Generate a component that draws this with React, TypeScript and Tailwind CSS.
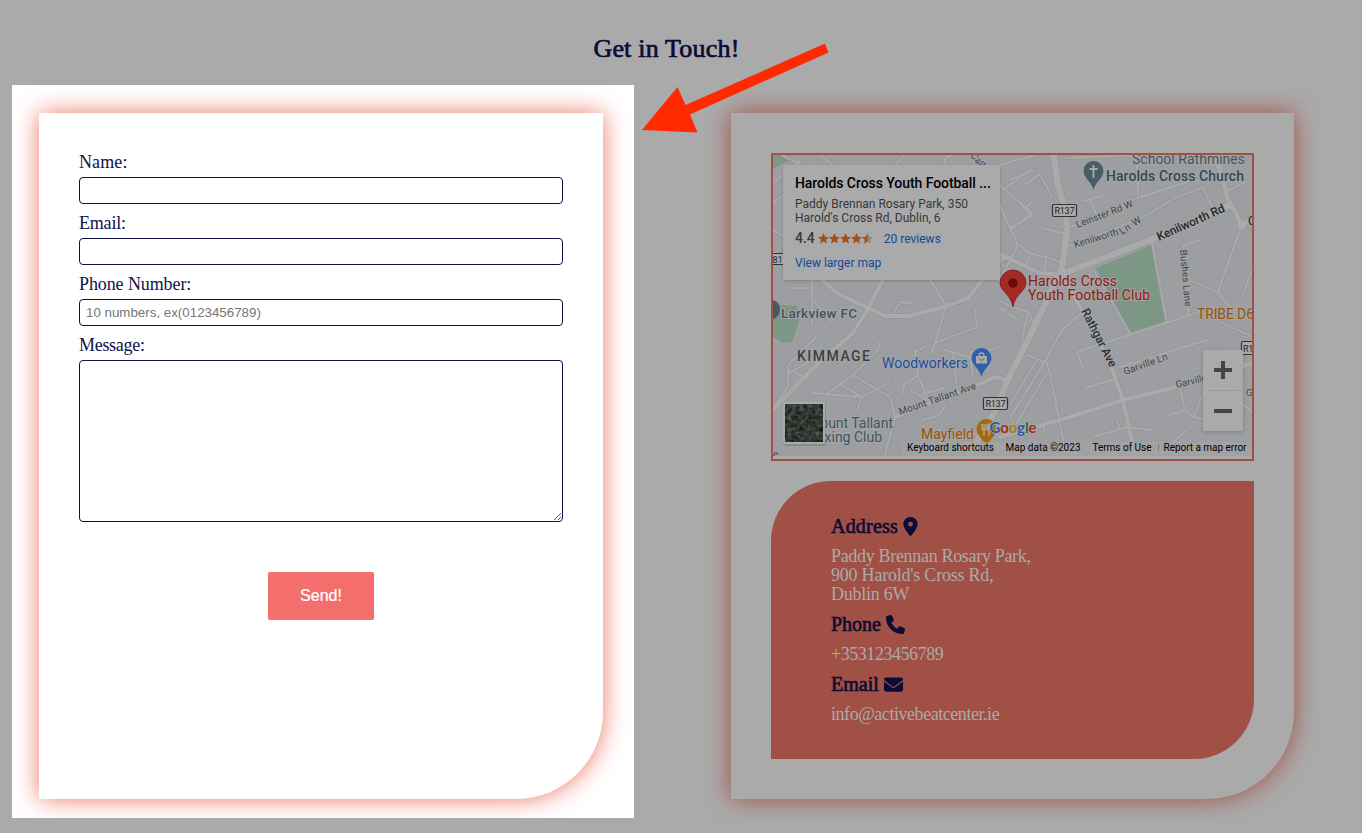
import React from "react";
import { FaLocationDot, FaPhone, FaEnvelope } from "react-icons/fa6";

const minorRoads = [
  "M773 183L800 160M782 155L812 170M820 155L838 170M905 155L885 175M773 203L790 190",
  "M947 165C935 156 968 148 990 155M1000 165L1035 155M1003 190L1030 170",
  "M1000 205L1018 245L1000 280M1000 185L1032 213L1010 230",
  "M1010 180L1033 170M1023 186L1040 174L1052 197M1020 203L1032 216L1010 228M1031 202L1024 210",
  "M1042 228L1063 233M1020 245C1028 257 1046 255 1060 262M1030 255L1026 265M1046 260L1045 271",
  "M1067 158L1137 155M1137 162L1138 195M1084 201L1105 195M1091 201L1097 217",
  "M1070 227L1138 198L1193 180M1070 246L1141 218L1175 198L1203 187L1212 207",
  "M1212 155L1227 190M1226 192L1245 182M1242 225L1218 291L1225 302L1253 322M1253 268L1243 294",
  "M1200 240L1183 246L1189 281L1188 315M1189 280L1218 292",
  "M1094 270L1130 334M1152 242L1167 323M1083 368L1077 352L1190 315L1208 308",
  "M1220 322L1253 337M1120 367L1207 340M1085 388L1113 380M1093 437L1127 427L1152 430M1117 420L1119 427",
  "M1180 388L1185 410L1193 417L1206 420M1170 415L1185 410M1194 416L1204 391",
  "M1082 313L1062 330L1047 358L1010 418M1027 355L1047 363L1050 373L1066 455M1047 373L1017 423M1037 360L1010 405",
  "M1000 301L1010 306L1028 312L1036 327M1028 312L1022 340M1043 424L1045 434",
  "M812 280L812 325M790 288L812 288M813 299L831 322",
  "M947 303L935 343L931 354M975 310L977 327L935 343M1000 308L1018 320",
  "M773 408L788 387L788 365L818 335M788 369L808 379M788 374L835 347",
  "M813 393L862 397L890 382M828 393L853 375L875 353L880 345L877 340M853 375L890 397L895 417L885 455M840 384L862 397L857 410",
  "M918 373L915 350M902 395L904 385L918 375L927 397M915 352L925 347M922 394L945 388M953 351L956 383M973 377L970 352L985 349",
  "M922 420L938 416L946 405M945 350L972 358L1000 346M910 390L930 401",
  "M1123 450L1170 444L1187 430M1217 350L1253 367M1240 355L1238 400L1253 413",
  "M773 255L783 245M773 230L783 236M930 280L943 300L946 306M980 280L968 300M892 316L900 302L912 303",
];
const majorRoads = [
  "M773 410L818 363L853 333L868 309L883 280",
  "M822 280L840 295L862 305L885 316L908 316L945 307L968 298L986 276L1003 258L1010 258",
  "M895 417L978 385L995 377L1008 380",
  "M1000 254L1012 260L1040 273L1062 275L1080 307L1110 363L1123 400L1135 455",
  "M1000 437L1060 420L1123 400L1177 387L1253 363",
  "M1217 155L1227 197L1242 225L1253 219",
];
const mainRoad =
  "M1053 150L1058 185L1066 212L1067 232L1062 268L1047 300L1023 350L1010 375L994 413L966 460M1062 274L1153 239L1228 206";

function Map() {
  return (
    <svg className="block h-[301px] w-[479px]" viewBox="773 155 479 301" fontFamily="Roboto, sans-serif">
      <defs>
        <filter id="aerial" x="0" y="0" width="1" height="1" colorInterpolationFilters="sRGB">
          <feTurbulence type="fractalNoise" baseFrequency="0.25" numOctaves="3" seed="7" />
          <feColorMatrix values="0.45 0 0 0 -0.04 0.4 0.08 0 0 -0.02 0.4 0 0.05 0 -0.03 0 0 0 0 1" />
        </filter>
      </defs>
      <rect x="773" y="155" width="480" height="301" fill="#9c9ea1" />
      <g fill="#7c9785">
        <path d="M773 155H790L789 161L773 168Z" />
        <path d="M773 304L797 306L799 322L792 342L783 343L773 337Z" />
        <path d="M1096 268L1152 245L1166 321L1130 335Z" />
      </g>
      <g fill="none" strokeLinejoin="round" strokeLinecap="round">
        {minorRoads.map((d) => <path key={d} d={d} stroke="#939598" strokeWidth="3.9" />)}
        {majorRoads.map((d) => <path key={d} d={d} stroke="#939598" strokeWidth="5.4" />)}
        <path d={mainRoad} stroke="#939598" strokeWidth="7.8" />
        {minorRoads.map((d) => <path key={d} d={d} stroke="#a7a8a9" strokeWidth="2.4" />)}
        {majorRoads.map((d) => <path key={d} d={d} stroke="#a9aaaa" strokeWidth="4" />)}
        <path d={mainRoad} stroke="#a9aaaa" strokeWidth="6.4" />
        <circle cx="1242" cy="225" r="4" fill="#a9aaaa" stroke="#a9aaaa" />
      </g>
      <g fill="#3f4346" stroke="#a4a5a6" strokeWidth="2" paintOrder="stroke" fontSize="9.8">
        <text transform="translate(1077.500 228) rotate(-21)" textLength="60">Leinster Rd W</text>
        <text transform="translate(1075 248) rotate(-17)" textLength="46">Kenilworth</text>
        <text transform="translate(1122 235) rotate(-34)" textLength="24">Ln W</text>
        <text transform="translate(1159 241) rotate(-24)" fontSize="12" fontWeight="500" fill="#252729" textLength="73">Kenilworth Rd</text>
        <text transform="translate(1180 250) rotate(85)" textLength="57">Bushes Lane</text>
        <text transform="translate(1081 311) rotate(63)" fontSize="12" fontWeight="500" fill="#2c2f31" textLength="64">Rathgar Ave</text>
        <text transform="translate(1125 375) rotate(-20)" textLength="46">Garville Ln</text>
        <text transform="translate(1176.500 388) rotate(-13)" textLength="40">Garville A</text>
        <text transform="translate(900 415) rotate(-19)" textLength="81">Mount Tallant Ave</text>
        <text transform="translate(970 156) rotate(48)" textLength="20">Cath</text>
        <text x="1248" y="225" fontSize="12" fill="#252729">C</text>
        <text transform="translate(1152 451) rotate(-3)" fill="#808285">Winton Ave</text>
        <text x="1246" y="396">Ga</text>
        <text x="773" y="457">e</text>
      </g>
      <g fill="#aaa" stroke="#303234" strokeWidth="1.2">
        <rect x="1052.5" y="204.5" width="24" height="12" rx="1.5" />
        <rect x="983.5" y="397.5" width="24" height="12" rx="1.5" />
        <rect x="1241.5" y="341.5" width="24" height="13" rx="1.5" />
        <rect x="761.5" y="253.500" width="24" height="11" rx="1.5" />
      </g>
      <g fill="#222426" fontSize="9">
        <text x="1054.500" y="214" textLength="20">R137</text>
        <text x="985.500" y="407" textLength="20">R137</text>
        <text x="1243" y="351.500" textLength="20">R137</text>
        <text x="767" y="262.500">R81</text>
      </g>
      <g stroke="#a4a5a6" strokeWidth="2" paintOrder="stroke" fontSize="14">
        <text x="1132" y="164" fill="#41545e" textLength="113">School Rathmines</text>
        <text x="1106" y="181" fill="#344851" fontWeight="500" textLength="138">Harolds Cross Church</text>
        <text x="1028" y="286" fill="#8e1711" textLength="89">Harolds Cross</text>
        <text x="1028" y="300" fill="#8e1711" textLength="122">Youth Football Club</text>
        <text x="781" y="318" fill="#41545e" fontWeight="500" fontSize="13.500" textLength="76">Larkview FC</text>
        <text x="797" y="361" fill="#3b3e41" fontWeight="500" textLength="73">KIMMAGE</text>
        <text x="882" y="368" fill="#184da0" textLength="86">Woodworkers</text>
        <text x="921" y="439" fill="#985209" textLength="53">Mayfield</text>
        <text x="1197" y="319" fill="#985209" textLength="57">TRIBE D6</text>
        <text x="808" y="428" fill="#41545e" textLength="85">Mount Tallant</text>
        <text x="808" y="442" fill="#41545e" textLength="74">Boxing Club</text>
      </g>
      <path d="M773 300A10 10 0 0 1 773 319Z" fill="#465962" />
      <path d="M1093.500 190C1092 182 1083.500 178 1083.500 171A10 10 0 0 1 1103.500 171C1103.500 178 1095 182 1093.500 190Z" fill="#465c66" />
      <path d="M1093.500 165V178M1089.500 169H1097.500" stroke="#aaa" strokeWidth="1.8" />
      <path d="M981.500 377C980 369 971.500 365 971.500 358A10 10 0 0 1 991.500 358C991.500 365 983 369 981.500 377Z" fill="#325fa9" />
      <path d="M976 356H987V363.500H976Z" fill="#aaa" />
      <path d="M979 357V355.500A2.500 2.500 0 0 1 984 355.500V357" fill="none" stroke="#aaa" strokeWidth="1.3" />
      <path d="M979 358.500Q981.500 362 984 358.500" fill="none" stroke="#325fa9" />
      <path d="M986.500 448C985 440 976.500 436 976.500 429A10 10 0 0 1 996.500 429C996.500 436 988 440 986.500 448Z" fill="#a4690a" />
      <path d="M982 424V428Q982 430 984 430T986 428V424M984 424V436M989 436V424Q987 426 988 431" fill="none" stroke="#aaa" strokeWidth="1.3" />
      <path d="M1013 307C1011 294 1000 291 1000 283A13 13 0 0 1 1026 283C1026 291 1015 294 1013 307Z" fill="#a22a22" stroke="#801915" strokeWidth="0.8" />
      <circle cx="1013" cy="283" r="4.700" fill="#680c09" />
      <rect x="783" y="403" width="43" height="43" rx="3" fill="#000" opacity="0.12" />
      <rect x="783" y="402" width="42" height="42" rx="2" fill="#aaa" />
      <rect x="785" y="404" width="38" height="38" fill="#2c342c" filter="url(#aerial)" />
      <text y="433" x="989.500" fontSize="15" fontFamily="Lato, sans-serif" fontWeight="700" textLength="47" stroke="#aaa" strokeWidth="1.5" paintOrder="stroke">
        <tspan fill="#2c59a4">G</tspan><tspan fill="#9d2d24">o</tspan><tspan fill="#a87d05">o</tspan><tspan fill="#2c59a4">g</tspan><tspan fill="#23713a">l</tspan><tspan fill="#9d2d24">e</tspan>
      </text>
      <rect x="902" y="442" width="351" height="14" fill="#a4a4a4" fillOpacity="0.7" />
      <g fontSize="10" fill="#000">
        <text x="907" y="451" textLength="87">Keyboard shortcuts</text>
        <text x="1005.500" y="451" textLength="75">Map data ©2023</text>
        <text x="1092.500" y="451" textLength="59">Terms of Use</text>
        <text x="1163.500" y="451" textLength="83">Report a map error</text>
      </g>
      <path d="M1158.500 444V451" stroke="#77797b" />
    </svg>
  );
}

function Stars() {
  const star = "M6 0L7.800 4.100L12 4.500L8.800 7.300L9.800 11.500L6 9.300L2.200 11.500L3.200 7.300L0 4.500L4.200 4.100Z";
  return (
    <svg className="-mt-[2px] ml-[3px] h-[11px] w-[55px]" viewBox="0 0 60 12">
      {[0, 12, 24, 36].map((x) => <path key={x} d={star} fill="#a65014" transform={`translate(${x})`} />)}
      <path d={star} fill="#888" transform="translate(48)" />
      <path d="M54 0L52.200 4.100L48 4.500L51.200 7.300L50.200 11.500L54 9.300Z" fill="#a65014" />
    </svg>
  );
}

function MapCard() {
  return (
    <div className="absolute left-[10px] top-[10px] h-[115px] w-[217px] rounded-xs bg-[#aaaaaa] pl-3 pt-[10px] font-[Roboto,sans-serif] text-[12px] leading-[14px] text-[#373737] shadow-[0_1px_3px_rgba(0,0,0,0.2)]">
      <div className="text-[14px] font-medium leading-[17px] tracking-[-0.06px] text-black"><span className="whitespace-nowrap">Harolds Cross Youth Football ...</span></div>
      <div className="mt-[5px]">Paddy Brennan Rosary Park, 350<br />Harold's Cross Rd, Dublin, 6</div>
      <div className="mt-[7px] flex h-[14px] items-center">
        <span className="-mt-[2px] text-[14px] font-medium">4.4</span>
        <Stars />
        <span className="ml-[11px] text-[#124894]">20 reviews</span>
      </div>
      <div className="mt-[10px] text-[#124894]">View larger map</div>
    </div>
  );
}

function Field({ label, labelClass, placeholder }: { label: string; labelClass: string; placeholder?: string }) {
  return (
    <label className="block h-[61px]">
      <span className={`block h-[24px] text-[18px] leading-[18px] ${labelClass}`}>{label}</span>
      <input placeholder={placeholder} className="block h-[27px] w-full rounded-[4px] border border-[#10104b] bg-white px-[6px] font-['Liberation_Sans',sans-serif] text-[13.333px] placeholder:text-[#757575]" />
    </label>
  );
}

const infoHeading = "flex h-[21px] items-center text-[20px] text-[#0b0b35] [-webkit-text-stroke:0.6px_#0b0b35]";

export default function App() {
  return (
    <main className="relative h-[833px] w-[1362px] overflow-hidden bg-[#aaaaaa] font-['Liberation_Serif',serif]">
      <h1 className="flex h-[85px] w-[1333px] items-center justify-center pt-[11px] text-[26px] tracking-[0.2px] text-[#0b0b35] [-webkit-text-stroke:0.7px_#0b0b35]">Get in Touch!</h1>
      <div className="flex pl-3">
        <section className="h-[733px] w-[622px] overflow-hidden bg-white pl-[27px] pt-[28px]">
          <form className="h-[686px] w-[564px] rounded-br-[87px] bg-white px-10 pt-10 text-[#10104b] shadow-[0_0_25px_#ee7565]">
            <Field label="Name:" labelClass="tracking-[0.1px]" />
            <Field label="Email:" labelClass="tracking-[-0.2px]" />
            <Field label="Phone Number:" labelClass="tracking-[-0.1px]" placeholder="10 numbers, ex(0123456789)" />
            <label className="block">
              <span className="block h-[24px] text-[18px] leading-[18px] tracking-[-0.3px]">Message:</span>
              <textarea className="block h-[162px] w-full rounded-[4px] border border-[#10104b] bg-white" />
            </label>
            <button type="button" className="mx-auto mt-[50px] block h-[48px] w-[106px] rounded-xs bg-[#f46e6e] font-['Liberation_Sans',sans-serif] text-[16px] text-white [-webkit-text-stroke:0.2px_white]">Send!</button>
          </form>
        </section>
        <section className="ml-[97px] mt-[28px] h-[686px] w-[563px] rounded-br-[87px] bg-[#aaaaaa] px-10 pt-10 shadow-[0_0_25px_#a05045]">
          <div className="relative h-[308px] border-2 border-[#a05045]">
            <Map />
            <MapCard />
            <div className="absolute right-[9px] top-[195px] h-[81px] w-[40px] rounded-xs bg-[#aaaaaa] shadow-[0_1px_4px_rgba(0,0,0,0.2)]">
              <svg className="h-[81px] w-[40px]" viewBox="0 0 40 81">
                <path d="M11 20H29M20 11V29M11 61H29" stroke="#444" strokeWidth="4" />
                <path d="M5 40.500H35" stroke="#999" />
              </svg>
            </div>
          </div>
          <div className="mt-5 h-[278px] rounded-br-[60px] rounded-tl-[60px] bg-[#a05045] pl-[60px] pt-[35px] text-[18px] leading-[19px] text-[#aaaaaa]">
            <h2 className={infoHeading}><span className="tracking-[0.2px]">Address</span><FaLocationDot className="ml-[5px] h-[19px] w-[15px]" /></h2>
            <p className="mt-[10px]"><span className="tracking-[-0.32px]">Paddy Brennan Rosary Park,</span><br /><span className="tracking-[-0.22px]">900 Harold's Cross Rd,</span><br /><span className="tracking-[-0.25px]">Dublin 6W</span></p>
            <h2 className={`mt-[10px] ${infoHeading}`}><span>Phone</span><FaPhone className="ml-[5px] size-[19px]" /></h2>
            <p className="mt-[10px]"><span className="tracking-[-0.45px]">+353123456789</span></p>
            <h2 className={`mt-[10px] ${infoHeading}`}><span>Email</span><FaEnvelope className="ml-[5px] size-[19px]" /></h2>
            <p className="mt-[10px]"><span className="tracking-[-0.45px]">info@activebeatcenter.ie</span></p>
          </div>
        </section>
      </div>
      <svg className="pointer-events-none absolute left-[640px] top-[40px] h-[95px] w-[192px]" viewBox="640 40 192 95">
        <path d="M642 130L677.500 87L685.500 105L825 43.500L828.500 52.500L690 114.500L697.500 132.500Z" fill="#ff2a00" />
      </svg>
    </main>
  );
}
